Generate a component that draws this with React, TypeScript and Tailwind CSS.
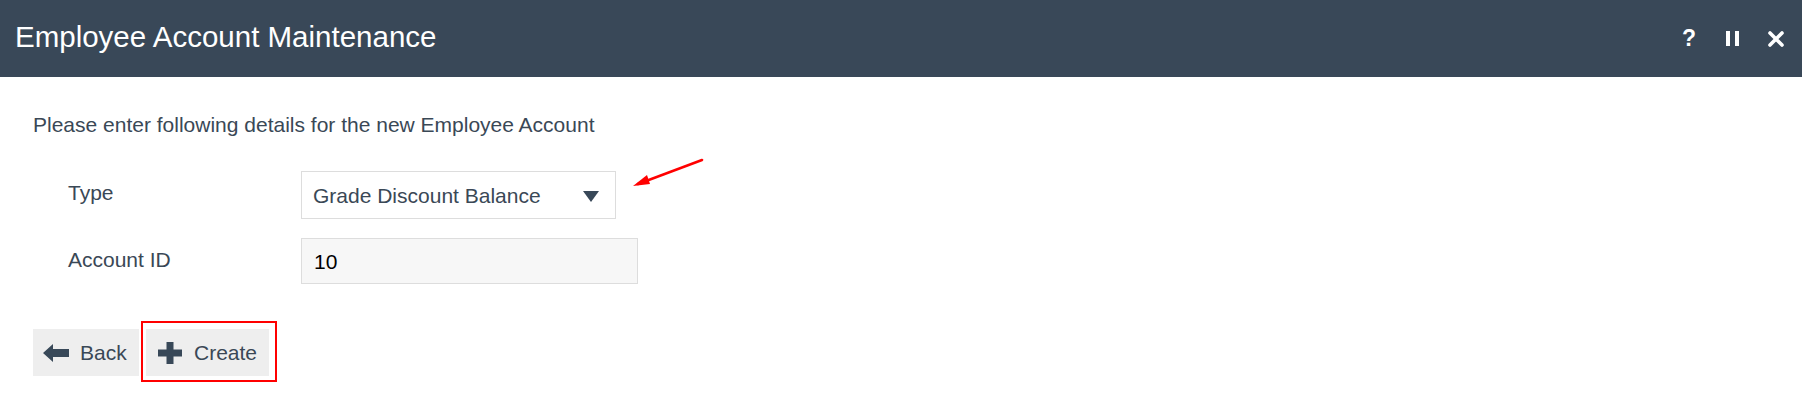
import React from "react";

const font = { fontFamily: '"Liberation Sans", Arial, sans-serif' };

function BackArrow() {
  return (
    <svg width="26" height="18" viewBox="0 0 26 18" className="shrink-0">
      <path d="M0 9 L10 0 L10 5 L26 5 L26 13 L10 13 L10 18 Z" fill="#384858" />
    </svg>
  );
}

function PlusIcon() {
  return (
    <svg width="24" height="22" viewBox="0 0 24 22" className="shrink-0">
      <path d="M8.5 0 H15.5 V7.5 H24 V14.5 H15.5 V22 H8.5 V14.5 H0 V7.5 H8.5 Z" fill="#384858" />
    </svg>
  );
}

function CloseIcon() {
  return (
    <svg width="16" height="16" viewBox="0 0 16 16">
      <path d="M2 2 L14 14 M14 2 L2 14" stroke="#ffffff" strokeWidth="3.6" strokeLinecap="round" />
    </svg>
  );
}

export default function App() {
  return (
    <div className="w-[1802px] h-[412px] bg-white overflow-hidden" style={font}>
      {/* title bar */}
      <header className="h-[77px] bg-[#394858] flex items-center justify-between pl-[15px] pr-[18px]">
        <h1 className="text-white text-[29.5px] leading-[34px] -mt-[3px]">Employee Account Maintenance</h1>
        <div className="flex items-center text-white">
          <span className="text-[23px] font-bold leading-none mr-[30px]">?</span>
          <span className="flex gap-[5px] mr-[29px]">
            <span className="w-[4px] h-[15px] bg-white" />
            <span className="w-[4px] h-[15px] bg-white" />
          </span>
          <CloseIcon />
        </div>
      </header>

      <main className="relative pl-[33px] pt-[36px] text-[#3a4856] text-[21px]">
        <p className="leading-[24px]">Please enter following details for the new Employee Account</p>

        <div className="mt-[34px] pl-[35px] flex flex-col gap-[19px]">
          <div className="flex items-center">
            <label className="w-[233px] leading-[24px] -mt-[4px]">Type</label>
            <div className="w-[315px] h-[48px] border border-[#dddddd] bg-white flex items-center justify-between pl-[11px] pr-[16px]">
              <span className="leading-[24px] pt-[2px]">Grade Discount Balance</span>
              <svg width="16" height="11" viewBox="0 0 16 11" className="mt-[2px]">
                <path d="M0 0 H16 L8 11 Z" fill="#384858" />
              </svg>
            </div>
          </div>
          <div className="flex items-center">
            <label className="w-[233px] leading-[24px] -mt-[3px]">Account ID</label>
            <div className="w-[337px] h-[46px] border border-[#dddddd] bg-[#f7f7f7] flex items-center pl-[12px]">
              <span className="leading-[24px] text-black pt-[1px]">10</span>
            </div>
          </div>
        </div>

        <div className="mt-[45px] flex items-center gap-[7px]">
          <button className="h-[47px] w-[106px] bg-[#eeeeee] flex items-center gap-[11px] pl-[10px] text-[21px] text-[#3a4856]">
            <BackArrow />
            <span className="leading-[24px]">Back</span>
          </button>
          <div className="relative">
            <button className="h-[47px] w-[123px] bg-[#eeeeee] flex items-center gap-[12px] pl-[12px] text-[21px] text-[#3a4856]">
              <PlusIcon />
              <span className="leading-[24px]">Create</span>
            </button>
            {/* highlight frame around the Create action */}
            <div className="absolute left-[-5px] top-[-8px] w-[136px] h-[61px] border-2 border-[#ff0000] pointer-events-none" />
          </div>
        </div>

        {/* pointer toward the Type selector */}
        <svg className="absolute left-[620px] top-[70px]" width="100" height="50" viewBox="0 0 100 50">
          <path d="M82 13 L18 37" stroke="#ff0000" strokeWidth="2.5" strokeLinecap="round" />
          <path d="M13 39 L27 28 L30 37 Z" fill="#ff0000" />
        </svg>
      </main>
    </div>
  );
}
